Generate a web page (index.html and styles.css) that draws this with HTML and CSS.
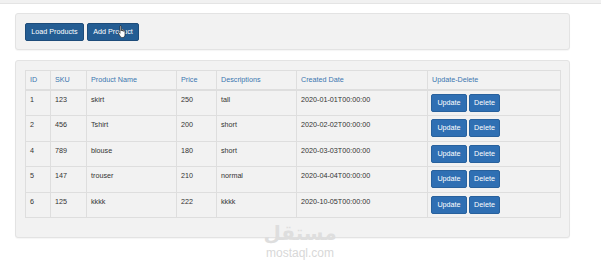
FILE: index.html
```html
<!DOCTYPE html>
<html>
<head>
<meta charset="utf-8">
<link rel="stylesheet" href="styles.css">
</head>
<body>
<div class="topstrip"></div>
<div class="page">
  <div class="panel toolbar">
    <button class="btn btn-dark">Load Products</button>
    <button class="btn btn-dark add">Add Product
      <svg class="cursor" width="10" height="13" viewBox="0 0 10 13"><path d="M3 1.2c0-.7 1.2-.7 1.2 0V6l.2-1c.2-.6 1.1-.5 1.1.1v1l.2-.7c.2-.6 1.1-.5 1.1.1v1l.2-.5c.2-.5 1-.4 1 .2V10c0 1.5-1 2.5-2.5 2.5H5.2C4.2 12.5 3.6 12 3 11L1.2 8c-.4-.7.4-1.3 1-.7L3 8.3z" fill="#fff" stroke="#222" stroke-width=".7"/></svg>
    </button>
  </div>
  <div class="panel tablepanel">
    <table class="grid">
      <colgroup>
        <col class="c-id"><col class="c-sku"><col class="c-name"><col class="c-price"><col class="c-desc"><col class="c-date"><col class="c-act">
      </colgroup>
      <thead>
        <tr><th>ID</th><th>SKU</th><th>Product Name</th><th>Price</th><th>Descriptions</th><th>Created Date</th><th>Update-Delete</th></tr>
      </thead>
      <tbody>
        <tr><td>1</td><td>123</td><td>skirt</td><td>250</td><td>tall</td><td>2020-01-01T00:00:00</td><td class="acts"><button class="btn btn-blue upd">Update</button><button class="btn btn-blue del">Delete</button></td></tr>
        <tr><td>2</td><td>456</td><td>Tshirt</td><td>200</td><td>short</td><td>2020-02-02T00:00:00</td><td class="acts"><button class="btn btn-blue upd">Update</button><button class="btn btn-blue del">Delete</button></td></tr>
        <tr><td>4</td><td>789</td><td>blouse</td><td>180</td><td>short</td><td>2020-03-03T00:00:00</td><td class="acts"><button class="btn btn-blue upd">Update</button><button class="btn btn-blue del">Delete</button></td></tr>
        <tr><td>5</td><td>147</td><td>trouser</td><td>210</td><td>normal</td><td>2020-04-04T00:00:00</td><td class="acts"><button class="btn btn-blue upd">Update</button><button class="btn btn-blue del">Delete</button></td></tr>
        <tr><td>6</td><td>125</td><td>kkkk</td><td>222</td><td>kkkk</td><td>2020-10-05T00:00:00</td><td class="acts"><button class="btn btn-blue upd">Update</button><button class="btn btn-blue del">Delete</button></td></tr>
      </tbody>
    </table>
  </div>
</div>
<div class="watermark">
  <div class="wm-ar">مستقل</div>
  <div class="wm-en">mostaql.com</div>
</div>
</body>
</html>
```

FILE: styles.css
```css
html, body {
  margin: 0;
  padding: 0;
  background: #fff;
  font-family: "Liberation Sans", Arial, sans-serif;
  color: #333;
}
body {
  position: relative;
  width: 601px;
  height: 262px;
  overflow: hidden;
}
.topstrip {
  height: 3px;
  background: #f1f1f1;
  border-bottom: 1px solid #e4e4e4;
}
.page {
  padding: 9px 0 0 15px;
  width: 555px;
}
.panel {
  background: #f2f2f2;
  border: 1px solid #e3e3e3;
  border-radius: 3px;
  box-shadow: 0 1px 1px rgba(0,0,0,0.04);
  box-sizing: border-box;
}
.toolbar {
  height: 37px;
  padding: 9px 9px;
  display: flex;
  gap: 3px;
  align-items: flex-start;
}
.btn {
  font-family: "Liberation Sans", Arial, sans-serif;
  font-size: 7.2px;
  color: #fff;
  border-radius: 2px;
  padding: 0;
  margin: 0;
  cursor: pointer;
}
.btn-dark {
  background: #245d93;
  border: 1px solid #1d4c7a;
  height: 18px;
  line-height: 16px;
}
.toolbar .btn-dark:first-child { width: 59px; }
.add { width: 52px; position: relative; }
.cursor {
  position: absolute;
  left: 29px;
  top: 1px;
}
.tablepanel {
  margin-top: 10px;
  padding: 9px 8px 19px 9px;
}
.grid {
  border-collapse: collapse;
  width: 535px;
  table-layout: fixed;
  font-size: 7.2px;
  background: #f2f2f2;
}
.c-id { width: 25px; }
.c-sku { width: 36px; }
.c-name { width: 90px; }
.c-price { width: 40px; }
.c-desc { width: 80px; }
.c-date { width: 131px; }
.c-act { width: 133px; }
.grid th, .grid td {
  border: 1px solid #dedede;
  text-align: left;
  vertical-align: top;
  padding: 0 4px;
}
.grid th {
  color: #3a76b0;
  font-weight: normal;
  height: 18px;
  line-height: 18px;
  border-bottom: 2px solid #dedede;
}
.grid td {
  height: 21.4px;
  padding-top: 3px;
  line-height: 11px;
  color: #333;
  white-space: nowrap;
}
.acts {
  display: table-cell;
}
.btn-blue {
  background: #2f6fb3;
  border: 1px solid #28619d;
  height: 18px;
  line-height: 16px;
  vertical-align: top;
}
.upd { width: 36px; margin-left: -1px; }
.del { width: 31px; margin-left: 2px; }
.watermark {
  position: absolute;
  left: 262px;
  top: 223px;
  width: 76px;
  text-align: center;
  color: #dedede;
  line-height: 1;
}
.wm-ar {
  font-family: "DejaVu Sans", sans-serif;
  font-weight: bold;
  font-size: 20px;
  height: 24px;
}
.wm-en {
  font-family: "Liberation Sans", Arial, sans-serif;
  font-size: 12px;
  color: #d8d8d8;
}
```
